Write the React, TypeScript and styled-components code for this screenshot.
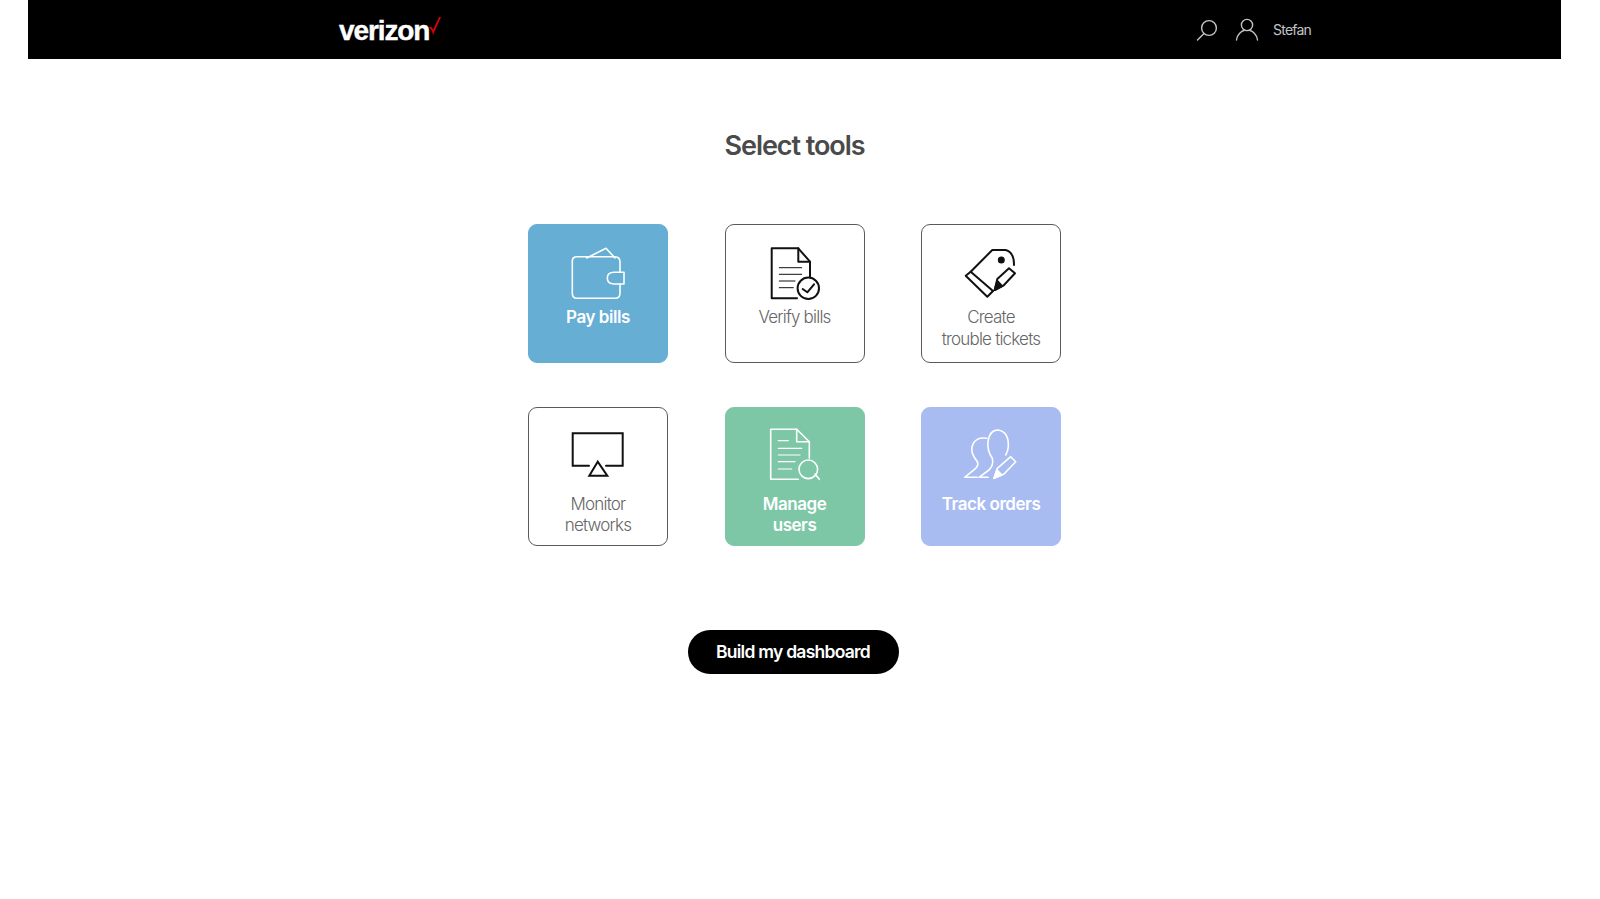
import styled, { createGlobalStyle } from "styled-components";

const GlobalStyle = createGlobalStyle`
  html, body {
    margin: 0;
    padding: 0;
    background: #fff;
    font-family: Inter, "Liberation Sans", sans-serif;
  }
`;

const Header = styled.header`
  display: flex;
  align-items: center;
  justify-content: space-between;
  box-sizing: border-box;
  height: 59px;
  margin: 0 39px 0 28px;
  padding: 0 250px 0 311px;
  background: #000;
`;

const Logo = styled.div`
  display: flex;
  align-items: flex-start;
  height: 40px;
`;

const LogoText = styled.span`
  margin-top: 5px;
  font-family: "Liberation Sans", Arial, sans-serif;
  font-size: 28px;
  line-height: 32px;
  font-weight: 700;
  letter-spacing: -1.1px;
  color: #fff;
  -webkit-text-stroke: 0.4px #fff;
`;

const LogoCheck = styled.svg`
  width: 14px;
  height: 20px;
  margin: 6px 0 0 -1px;
`;

const UserArea = styled.div`
  display: flex;
  align-items: center;
`;

const NavIcon = styled.svg<{ $gap: number }>`
  width: 24px;
  height: 24px;
  margin-right: ${(p) => p.$gap}px;
  fill: none;
  stroke: #c4c4c4;
  stroke-width: 1.4;
  stroke-linecap: round;
`;

const UserName = styled.span`
  font-size: 14px;
  letter-spacing: -0.8px;
  color: #c4c4c4;
`;

const Main = styled.main`
  display: flex;
  flex-direction: column;
  align-items: center;
  padding: 70px 11px 0 0;
`;

const Title = styled.h1`
  margin: 0;
  font-size: 27px;
  line-height: 34px;
  font-weight: 600;
  letter-spacing: -1.05px;
  color: #4a4a4a;
`;

const Grid = styled.div`
  display: grid;
  grid-template-columns: repeat(3, 140px);
  grid-auto-rows: 139.2px;
  column-gap: 56.5px;
  row-gap: 43.6px;
  margin-top: 61px;
`;

const Card = styled.div<{ $bg?: string }>`
  display: flex;
  flex-direction: column;
  align-items: center;
  box-sizing: border-box;
  padding-top: 19px;
  border-radius: 9px;
  border: 1px solid ${(p) => p.$bg || "#5a5a5a"};
  background: ${(p) => p.$bg || "#fff"};
  color: ${(p) => (p.$bg ? "#fff" : "#666")};
`;

const Icon = styled.svg`
  flex: none;
  width: 60px;
  height: 60px;
  fill: none;
  stroke: currentColor;
  stroke-width: 1.6;
  stroke-linejoin: round;
  stroke-linecap: round;
`;

const DarkIcon = styled(Icon)`
  color: #111;
  stroke-width: 2;
`;

const Label = styled.div<{ $bold?: boolean; $low?: boolean }>`
  margin-top: ${(p) => (p.$low ? 7 : 3)}px;
  font-size: 17px;
  line-height: 21.5px;
  font-weight: ${(p) => (p.$bold ? 600 : 300)};
  letter-spacing: ${(p) => (p.$bold ? "-0.45px" : "-0.8px")};
  text-align: center;
`;

const BuildButton = styled.button`
  width: 211px;
  height: 44px;
  margin: 84px 3px 0 0;
  padding: 0;
  border: 0;
  border-radius: 22px;
  background: #000;
  color: #fff;
  font-family: inherit;
  font-size: 17.5px;
  font-weight: 600;
  letter-spacing: -0.75px;
`;

export default function App() {
  return (
    <>
      <GlobalStyle />
      <Header>
        <Logo>
          <LogoText>verizon</LogoText>
          <LogoCheck viewBox="0 0 14 20">
            <path d="M1 11 L4 15 L5 19 L13 1 L11 1 L5.2 13.5 L3.5 11 Z" fill="#cd040b" />
          </LogoCheck>
        </Logo>
        <UserArea>
          <NavIcon $gap={16} viewBox="0 0 24 24">
            <circle cx="14" cy="10" r="7.4" />
            <path d="M9 15.5 L2.5 22" />
          </NavIcon>
          <NavIcon $gap={14} viewBox="0 0 24 24">
            <circle cx="12" cy="7" r="5.6" />
            <path d="M1.5 22 C2 16 7 13 9 12.5 M22.5 22 C22 16 17 13 15 12.5" />
          </NavIcon>
          <UserName>Stefan</UserName>
        </UserArea>
      </Header>
      <Main>
        <Title>Select tools</Title>
        <Grid>
          <Card $bg="#67aed4">
            <Icon viewBox="0 0 60 60" strokeWidth={2.2}>
              <path d="M52 28.3 V18 Q52 12.7 47 12.7 H9 Q4.3 12.7 4.3 17 V49 Q4.3 54.3 9 54.3 H47 Q52 54.3 52 49 V40" />
              <path d="M18.7 14 L38 4.3 L47 14" />
              <path d="M46 28.3 H56 V40 H46 Q39.3 40 39.3 34 Q39.3 28.3 46 28.3 Z" />
            </Icon>
            <Label $bold>Pay bills</Label>
          </Card>
          <Card>
            <DarkIcon viewBox="0 0 60 60">
              <path d="M45 34 V17.7 L33.3 4.3 H6.7 V54.3 H32" />
              <path d="M33.3 4.3 V17.7 H45" />
              <path d="M14.3 23.7 H36.7 M14.3 30.3 H36.7 M14.3 37 H30 M14.3 43.7 H28.3" strokeWidth={1} />
              <circle cx="43.3" cy="44.3" r="10.7" fill="#fff" />
              <path d="M37.7 45 L42.3 48.3 L49 40.3" />
            </DarkIcon>
            <Label>Verify bills</Label>
          </Card>
          <Card>
            <DarkIcon viewBox="0 0 60 60">
              <path d="M32 47 L9.7 27.7 L31.3 6 H44.7 Q53 8 53 21" />
              <path d="M9.7 27.7 L4.7 31.7 L26.3 52.7 L32 47" />
              <circle cx="40.3" cy="16" r="2.5" fill="#111" />
              <path d="M33.7 46 L36.3 35 L48 24.3 L54 29.3 L42.3 41.7 Z" />
              <path d="M33.7 46 L36.3 37 L41 42 Z" fill="#111" />
            </DarkIcon>
            <Label>
              Create
              <br />
              trouble tickets
            </Label>
          </Card>
          <Card>
            <DarkIcon viewBox="0 0 60 60" strokeLinecap="butt">
              <path d="M21 38.7 H4.7 V6.3 H54.7 V38.7 H38" strokeLinejoin="miter" />
              <path d="M29.7 34.7 L21.3 48.7 H39.3 Z" strokeLinejoin="miter" />
            </DarkIcon>
            <Label $low>
              Monitor
              <br />
              networks
            </Label>
          </Card>
          <Card $bg="#7dc7a7">
            <Icon viewBox="0 0 60 60">
              <path d="M44.3 31 V14.7 L31.7 2.3 H5.7 V52.3 H33.3" />
              <path d="M31.7 2.3 V14.7 H44.3" />
              <path d="M13.3 13.7 H23.3 M13.3 21.3 H36.7 M13.3 28 H35 M13.3 34.7 H30 M13.3 42 H26.7" strokeWidth={1.2} />
              <circle cx="43.3" cy="42.3" r="9.3" />
              <path d="M50 47 L54.3 52.3" />
            </Icon>
            <Label $bold $low>
              Manage
              <br />
              users
            </Label>
          </Card>
          <Card $bg="#a9bcf2">
            <Icon viewBox="0 0 60 60">
              <path d="M27 50.3 H18 L28 43 Q33 38 31.3 31.3 Q26 24 27 14.7 Q28.5 3 37 3 Q48 4.7 47.3 19.7 Q47 24 44.7 28" />
              <path d="M16.3 50.3 H3.7 L14.7 41.3 Q18 38 16.3 34.7 L13 29.7 Q9 23 12.3 16.3 Q16.3 9.7 25.7 11.3" />
              <path d="M33 51.3 L36.3 41.3 L49.7 29.7 L54.7 34.7 L43 47 Z" />
              <path d="M33 51.3 L36 43 L41 48 Z" fill="#fff" />
            </Icon>
            <Label $bold $low>
              Track orders
            </Label>
          </Card>
        </Grid>
        <BuildButton>Build my dashboard</BuildButton>
      </Main>
    </>
  );
}
